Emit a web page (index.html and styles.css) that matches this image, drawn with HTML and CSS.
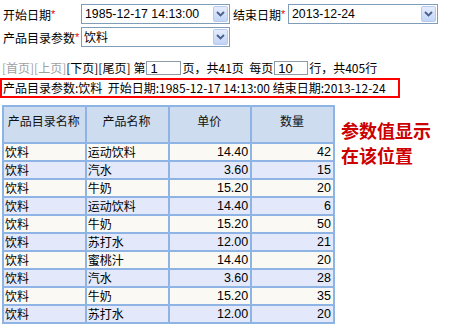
FILE: index.html
```html
<!DOCTYPE html>
<html>
<head>
<meta charset="utf-8">
<link rel="stylesheet" href="styles.css">
</head>
<body>
<div class="form">
  <div class="frow">
    <div class="lbl">开始日期<span class="req">*</span></div>
    <div class="sel w149"><span class="val">1985-12-17 14:13:00</span><span class="btn"><svg width="9" height="6" viewBox="0 0 9 6"><path d="M1 1 L4.5 4.5 L8 1" fill="none" stroke="#4a5f8c" stroke-width="1.8"/></svg></span></div>
    <div class="lbl2">结束日期<span class="req">*</span></div>
    <div class="sel w150"><span class="val">2013-12-24</span><span class="btn"><svg width="9" height="6" viewBox="0 0 9 6"><path d="M1 1 L4.5 4.5 L8 1" fill="none" stroke="#4a5f8c" stroke-width="1.8"/></svg></span></div>
  </div>
  <div class="frow">
    <div class="lbl">产品目录参数<span class="req">*</span></div>
    <div class="sel w149"><span class="val cjk">饮料</span><span class="btn"><svg width="9" height="6" viewBox="0 0 9 6"><path d="M1 1 L4.5 4.5 L8 1" fill="none" stroke="#4a5f8c" stroke-width="1.8"/></svg></span></div>
  </div>
</div>
<div class="pager">
  <span class="dis">[首页][上页]</span><span>[下页][尾页]</span><span class="sp">第</span><span class="inp w35">1</span><span>页，共41页&nbsp; 每页</span><span class="inp w34">10</span><span>行，共405行</span>
</div>
<div class="params">产品目录参数:饮料&nbsp; 开始日期:1985-12-17 14:13:00 结束日期:2013-12-24</div>
<div class="main">
  <table class="grid">
    <thead>
      <tr><th>产品目录名称</th><th>产品名称</th><th>单价</th><th>数量</th></tr>
    </thead>
    <tbody>
      <tr class="odd"><td>饮料</td><td>运动饮料</td><td class="num">14.40</td><td class="num">42</td></tr>
      <tr class="even"><td>饮料</td><td>汽水</td><td class="num">3.60</td><td class="num">15</td></tr>
      <tr class="odd"><td>饮料</td><td>牛奶</td><td class="num">15.20</td><td class="num">20</td></tr>
      <tr class="even"><td>饮料</td><td>运动饮料</td><td class="num">14.40</td><td class="num">6</td></tr>
      <tr class="odd"><td>饮料</td><td>牛奶</td><td class="num">15.20</td><td class="num">50</td></tr>
      <tr class="even"><td>饮料</td><td>苏打水</td><td class="num">12.00</td><td class="num">21</td></tr>
      <tr class="odd"><td>饮料</td><td>蜜桃汁</td><td class="num">14.40</td><td class="num">20</td></tr>
      <tr class="even"><td>饮料</td><td>汽水</td><td class="num">3.60</td><td class="num">28</td></tr>
      <tr class="odd"><td>饮料</td><td>牛奶</td><td class="num">15.20</td><td class="num">35</td></tr>
      <tr class="even"><td>饮料</td><td>苏打水</td><td class="num">12.00</td><td class="num">20</td></tr>
    </tbody>
  </table>
  <div class="note">参数值显示<br>在该位置</div>
</div>
</body>
</html>
```

FILE: styles.css
```css
html, body {
  margin: 0;
  padding: 0;
  background: #fff;
}
body {
  font-family: "Liberation Sans", "Noto Sans CJK SC", sans-serif;
  font-size: 12px;
  color: #000;
  overflow: hidden;
}
.form {
  padding: 4px 0 0 3px;
  display: flex;
  flex-direction: column;
  gap: 3px;
}
.frow {
  display: flex;
  align-items: center;
  height: 20px;
}
.lbl {
  width: 78px;
  white-space: nowrap;
  font-family: "Noto Sans CJK SC", sans-serif;
  line-height: 20px;
}
.lbl2 {
  width: 55px;
  padding-left: 3px;
  white-space: nowrap;
  font-family: "Noto Sans CJK SC", sans-serif;
  line-height: 20px;
}
.req {
  color: #e00;
  font-family: "Liberation Sans", sans-serif;
  vertical-align: 2px;
  font-size: 11px;
}
.sel {
  box-sizing: border-box;
  height: 20px;
  border: 1px solid #7f9db9;
  background: #fff;
  display: flex;
  align-items: center;
  justify-content: space-between;
  padding: 1px;
}
.w149 { width: 149px; }
.w150 { width: 150px; }
.val {
  padding-left: 2px;
  font-size: 12.3px;
  color: #000;
  line-height: 16px;
}
.val.cjk {
  font-family: "Noto Sans CJK SC", sans-serif;
  font-size: 12px;
  padding-left: 1px;
}
.btn {
  box-sizing: border-box;
  width: 15px;
  height: 16px;
  border: 1px solid #b7c9ef;
  border-radius: 2px;
  background: linear-gradient(#e4edfd, #c2d4f6);
  display: flex;
  align-items: center;
  justify-content: center;
}
.pager {
  margin-top: 14px;
  padding-left: 2px;
  display: flex;
  align-items: center;
  height: 14px;
  white-space: nowrap;
  font-family: "Noto Sans CJK SC", sans-serif;
}
.pager span { line-height: 14px; }
.dis { color: #a0a0a0; }
.sp { padding-left: 3px; }
.inp {
  box-sizing: border-box;
  height: 14px;
  border: 1px solid #909aa4;
  padding-left: 3px;
  font-family: "Liberation Sans", sans-serif;
  font-size: 13px;
  line-height: 13px;
  margin: 0 1px;
}
.w35 { width: 35px; }
.w34 { width: 34px; }
.params {
  margin-top: 3px;
  box-sizing: border-box;
  width: 400px;
  height: 20px;
  border: 2px solid #f00;
  padding-left: 1px;
  line-height: 16px;
  white-space: nowrap;
  font-family: "Noto Sans CJK SC", sans-serif;
  font-size: 12px;
}
.main {
  margin-top: 7px;
  padding-left: 2px;
  display: flex;
  align-items: flex-start;
}
.grid {
  border-collapse: collapse;
  width: 333px;
  table-layout: fixed;
  font-family: "Noto Sans CJK SC", sans-serif;
}
.grid th, .grid td {
  border: 2px solid #8db4e4;
  padding: 0 2px 0 1px;
  white-space: nowrap;
}
.grid th {
  background: #cedcef;
  font-weight: normal;
  height: 30px;
  vertical-align: top;
  padding-top: 5px;
  text-align: center;
  color: #111;
}
.grid td {
  height: 16px;
  line-height: 16px;
}
.grid td.num {
  text-align: right;
  font-family: "Liberation Sans", sans-serif;
  font-size: 12.5px;
}
.odd td { background: #faf9f4; }
.even td { background: #e3e9fb; }
.note {
  margin: 13px 0 0 6px;
  color: #cc0000;
  font-weight: bold;
  font-size: 18px;
  line-height: 25px;
  font-family: "Noto Sans CJK SC", sans-serif;
  white-space: nowrap;
}
```
